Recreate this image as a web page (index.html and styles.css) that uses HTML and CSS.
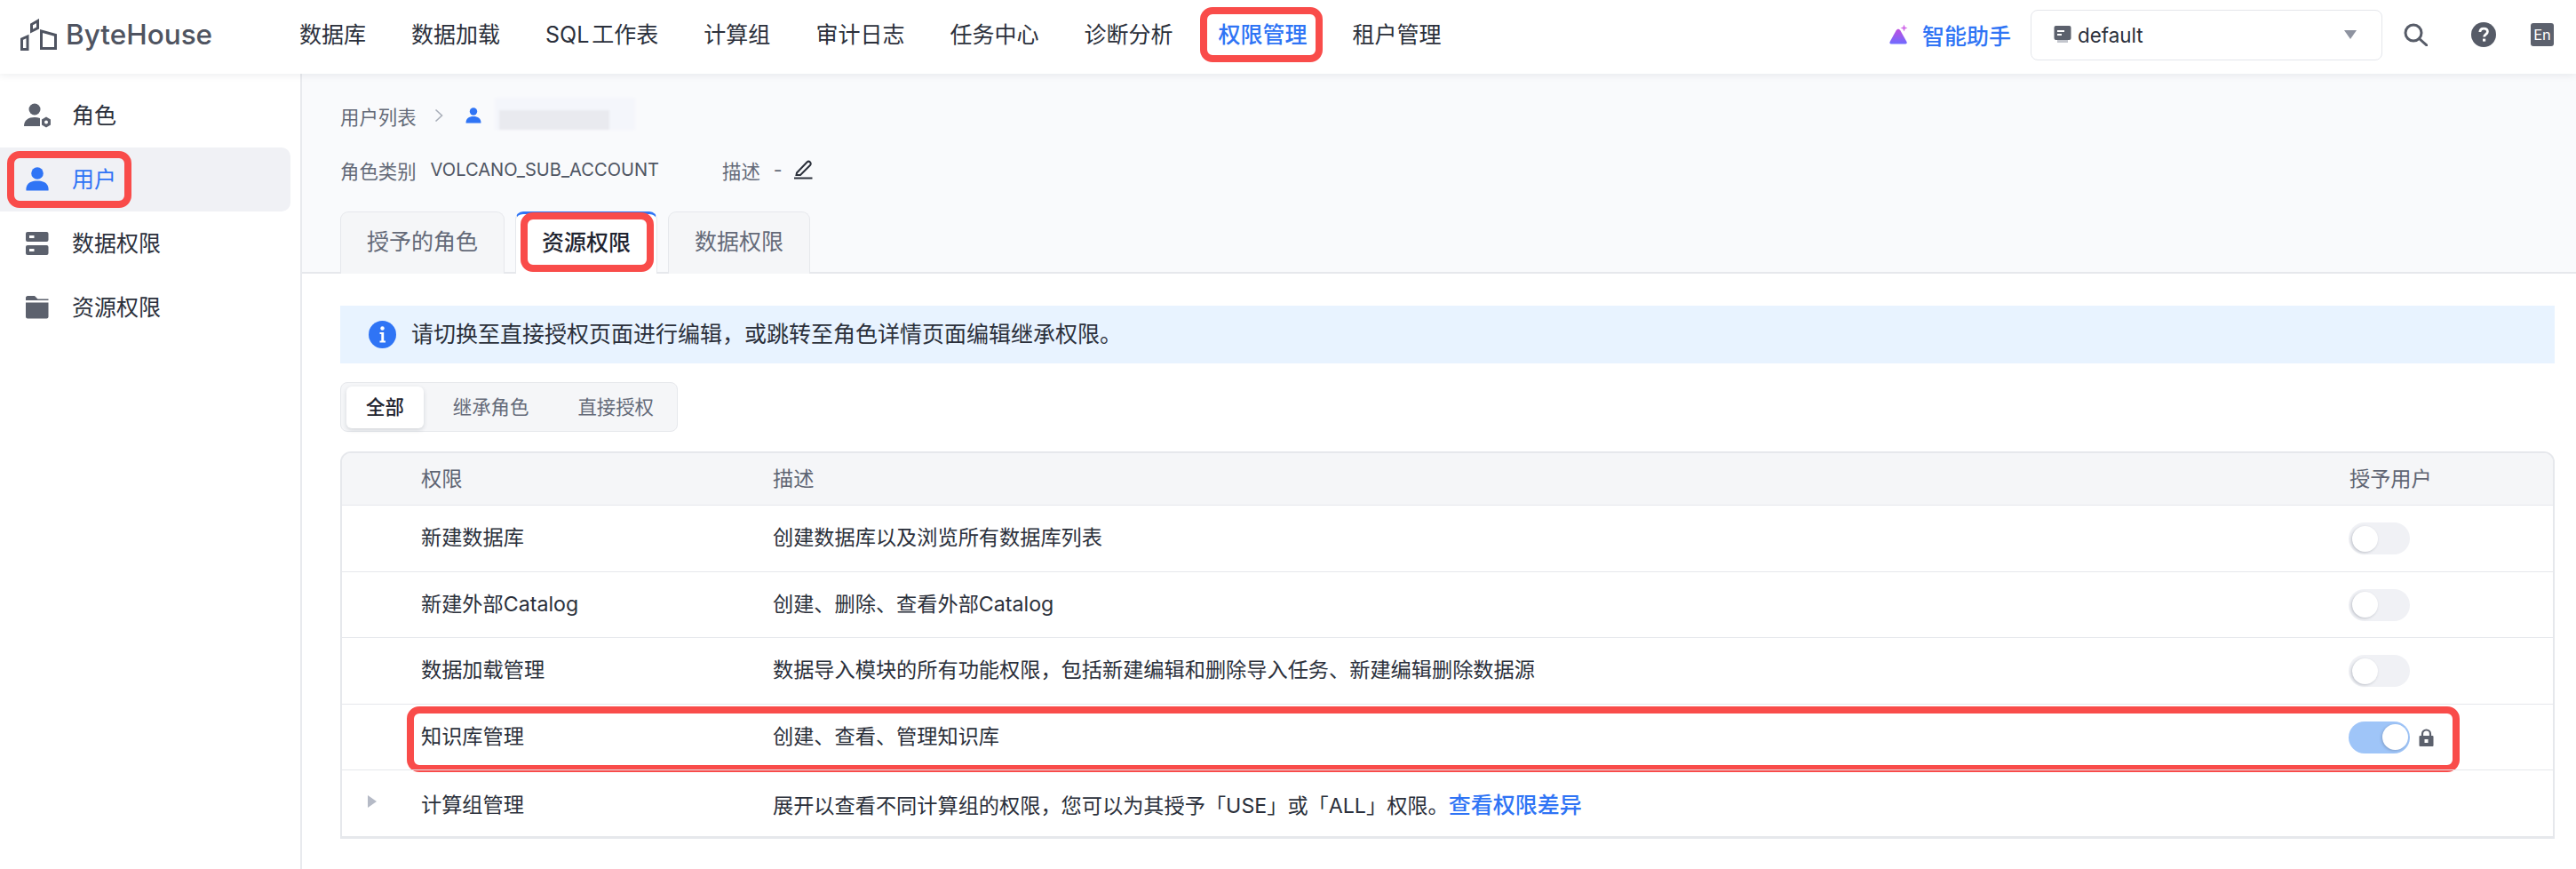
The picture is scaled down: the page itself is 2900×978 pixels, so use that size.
FILE: index.html
```html
<!DOCTYPE html>
<html lang="zh-CN">
<head>
<meta charset="utf-8">
<title>ByteHouse</title>
<link rel="stylesheet" href="styles.css">
</head>
<body>
<header class="topbar">
  <a class="logo">
    <svg class="logo-mark" viewBox="0 0 41 36" width="41" height="36" fill="none" stroke="#4f5461" stroke-width="3">
      <path d="M1.500 34.500V23L8 20V34.500Z"/>
      <path d="M12.500 14V6.500L19.500 2.500V10.500Z"/>
      <path d="M23.500 33.500V14L39.500 18.500V33.500Z"/>
    </svg>
    <span class="logo-text">ByteHouse</span>
  </a>
  <nav class="nav">
    <a class="nav-item">数据库</a>
    <a class="nav-item">数据加载</a>
    <a class="nav-item">SQL 工作表</a>
    <a class="nav-item">计算组</a>
    <a class="nav-item">审计日志</a>
    <a class="nav-item">任务中心</a>
    <a class="nav-item">诊断分析</a>
    <a class="nav-item is-active">权限管理<span class="mark mark-nav"></span></a>
    <a class="nav-item">租户管理</a>
  </nav>
  <div class="top-right">
    <a class="assistant">
      <svg viewBox="0 0 24 24" width="24" height="24">
        <defs><linearGradient id="ai" x1="0" y1="0" x2="0" y2="1"><stop offset="0" stop-color="#c04fe0"/><stop offset="1" stop-color="#6f6bff"/></linearGradient></defs>
        <path d="M3 22.500C1.500 22.500 1 21.500 1.600 20L8.500 7.500C10 5 12 5 13.500 7.500L20.500 20C21.200 21.500 20.500 22.500 19 22.500Z" fill="url(#ai)"/>
        <path d="M17.500 0.500L18.600 3.400L21.500 4.500L18.600 5.600L17.500 8.500L16.400 5.600L13.500 4.500L16.400 3.400Z" fill="#d16be8"/>
      </svg>
      <span>智能助手</span>
    </a>
    <div class="select">
      <svg viewBox="0 0 20 20" width="20" height="20">
        <rect x="0.500" y="0" width="19" height="16" rx="2" fill="#5c616d"/>
        <rect x="4" y="16" width="12" height="3" fill="#c3c6cd"/>
        <rect x="4" y="5" width="8" height="2" fill="#fff"/>
        <rect x="4" y="9" width="5" height="2" fill="#fff"/>
      </svg>
      <span class="select-value">default</span>
      <span class="select-caret"></span>
    </div>
    <svg class="icon-search" viewBox="0 0 27 26" width="27" height="26" fill="none" stroke="#575c68" stroke-width="3">
      <circle cx="11" cy="11" r="9"/>
      <path d="M17.500 17.500L26 25" stroke-linecap="round"/>
    </svg>
    <svg class="icon-help" viewBox="0 0 28 28" width="28" height="28">
      <circle cx="14" cy="14" r="14" fill="#565b67"/>
      <path d="M9.800 11C10 8.500 11.800 7.200 14.200 7.200C16.700 7.200 18.400 8.700 18.400 10.800C18.400 13.600 14.600 13.800 14.600 16.600" fill="none" stroke="#fff" stroke-width="2.800"/>
      <rect x="13" y="18.600" width="3.200" height="3" fill="#fff"/>
    </svg>
    <span class="lang">En</span>
  </div>
</header>

<div class="body">
  <aside class="side">
    <a class="side-item">
      <svg viewBox="0 0 30 30" width="30" height="30" fill="#5c616d">
        <circle cx="12" cy="8" r="6.500"/>
        <path d="M0 27C0 20 5 17 12 17C14 17 16 17.300 18 18L18 27Z"/>
        <path d="M25 16.500L30 19.500V25.500L25 28.500L20 25.500V19.500Z"/>
        <circle cx="25" cy="22.500" r="2" fill="#fff"/>
      </svg>
      <span class="side-label">角色</span>
    </a>
    <a class="side-item is-active">
      <svg viewBox="0 0 30 30" width="30" height="30" fill="#2f74f5">
        <circle cx="15" cy="8" r="6.800"/>
        <path d="M2.500 27.500C2 24 3 16.500 15 16.500C27 16.500 28 24 27.500 27.500Z"/>
      </svg>
      <span class="side-label">用户</span>
      <span class="mark mark-side"></span>
    </a>
    <a class="side-item">
      <svg viewBox="0 0 30 30" width="30" height="30" fill="#5c616d">
        <rect x="2" y="2" width="25.500" height="11" rx="2"/>
        <rect x="2" y="17" width="25.500" height="11" rx="2"/>
        <rect x="6" y="6" width="5.500" height="3" fill="#fff"/>
        <rect x="6" y="21" width="5.500" height="3" fill="#fff"/>
      </svg>
      <span class="side-label">数据权限</span>
    </a>
    <a class="side-item">
      <svg viewBox="0 0 30 30" width="30" height="30" fill="#5c616d">
        <path d="M2 4C2 3 3 2 4 2H12L15.500 5.500H27.500V7H2Z"/>
        <path d="M2 9.500H27.500V25.500C27.500 26.500 26.500 27.500 25.500 27.500H4C3 27.500 2 26.500 2 25.500Z"/>
      </svg>
      <span class="side-label">资源权限</span>
    </a>
  </aside>

  <main class="main">
    <section class="detail">
      <div class="crumbs">
        <span class="crumb-link">用户列表</span>
        <svg class="crumb-sep" viewBox="0 0 10 16" width="10" height="16" fill="none" stroke="#a9aeb9" stroke-width="1.600"><path d="M1.500 1.500L8.500 8L1.500 14.500"/></svg>
        <svg class="crumb-user" viewBox="0 0 18 18" width="18" height="18" fill="#2f74f5">
          <circle cx="9" cy="4.500" r="4.200"/>
          <path d="M0.500 17.500C0.500 12 4 10 9 10C14 10 17.500 12 17.500 17.500Z"/>
        </svg>
        <span class="redacted"></span>
      </div>
      <div class="meta">
        <span class="meta-label">角色类别</span>
        <span class="meta-value">VOLCANO_SUB_ACCOUNT</span>
        <span class="meta-label meta-desc">描述</span>
        <span class="meta-dash">-</span>
        <svg viewBox="0 0 21 22" width="21" height="22" fill="none" stroke="#2b303b" stroke-width="2"><path d="M3 15.500L14.500 3.500C15.500 2.500 17 2.500 18 3.500C19 4.500 19 6 18 7L7 18H2.500Z" transform="translate(0 -1)"/><path d="M0 20.500H20.500"/></svg>
      </div>
      <div class="tabs">
        <a class="tab">授予的角色</a>
        <a class="tab is-active">资源权限<span class="mark mark-tab"></span></a>
        <a class="tab">数据权限</a>
      </div>
    </section>

    <section class="content">
      <div class="alert">
        <svg viewBox="0 0 31 31" width="31" height="31">
          <circle cx="15.500" cy="15.500" r="15.500" fill="#2f74f5"/>
          <circle cx="15.500" cy="8.500" r="2.200" fill="#fff"/>
          <path d="M12.500 13H17.200V22.500H19V24.500H12.500V22.500H14.300V15H12.500Z" fill="#fff"/>
        </svg>
        <span class="alert-text">请切换至直接授权页面进行编辑，或跳转至角色详情页面编辑继承权限。</span>
      </div>

      <div class="seg">
        <span class="seg-item is-active">全部</span>
        <span class="seg-item">继承角色</span>
        <span class="seg-item">直接授权</span>
      </div>

      <div class="table">
        <div class="row row-head">
          <span></span>
          <span>权限</span>
          <span>描述</span>
          <span>授予用户</span>
        </div>
        <div class="row">
          <span></span>
          <span>新建数据库</span>
          <span>创建数据库以及浏览所有数据库列表</span>
          <span class="cell-switch"><span class="switch"></span></span>
        </div>
        <div class="row">
          <span></span>
          <span>新建外部Catalog</span>
          <span>创建、删除、查看外部Catalog</span>
          <span class="cell-switch"><span class="switch"></span></span>
        </div>
        <div class="row">
          <span></span>
          <span>数据加载管理</span>
          <span>数据导入模块的所有功能权限，包括新建编辑和删除导入任务、新建编辑删除数据源</span>
          <span class="cell-switch"><span class="switch"></span></span>
        </div>
        <div class="row">
          <span></span>
          <span>知识库管理</span>
          <span>创建、查看、管理知识库</span>
          <span class="cell-switch">
            <span class="switch is-on"></span>
            <svg viewBox="0 0 17 20" width="17" height="20">
              <path d="M4 9V6C4 3.500 6 1.500 8.500 1.500C11 1.500 13 3.500 13 6V9" fill="none" stroke="#5c616d" stroke-width="2.200"/>
              <rect x="0.500" y="8" width="16" height="12" rx="1" fill="#5c616d"/>
              <rect x="6.500" y="12" width="4" height="4" fill="#fff"/>
            </svg>
          </span>
          <span class="mark mark-row"></span>
        </div>
        <div class="row">
          <span class="cell-caret"><span class="caret"></span></span>
          <span>计算组管理</span>
          <span>展开以查看不同计算组的权限，您可以为其授予「USE」或「ALL」权限。<a class="link">查看权限差异</a></span>
          <span></span>
        </div>
      </div>
    </section>
  </main>
</div>
</body>
</html>
```

FILE: styles.css
```css
* { box-sizing: border-box; }

html, body {
  margin: 0;
  height: 100%;
  overflow: hidden;
}

body {
  display: flex;
  flex-direction: column;
  background: #fff;
  color: #2b303b;
  font-family: Inter, "Noto Sans CJK SC", sans-serif;
  font-size: 23.2px;
}

a { color: inherit; text-decoration: none; }
svg { display: block; flex: none; }

.mark {
  position: absolute;
  border: 8px solid #f94c4a;
  border-radius: 14px;
  pointer-events: none;
}

/* Top bar */
.topbar {
  position: relative;
  z-index: 2;
  flex: none;
  display: flex;
  align-items: center;
  height: 83px;
  padding: 0 25px 5px 23px;
  background: #fff;
  box-shadow: 0 2px 8px rgba(40, 50, 70, 0.08);
}

.logo {
  display: flex;
  align-items: center;
  gap: 10px;
  width: 314px;
}

.logo-mark { margin-top: -1px; }

.logo-text {
  font-size: 31.500px;
  font-weight: 500;
  line-height: 34px;
  color: #4f5461;
}

.nav {
  display: flex;
  gap: 51px;
  font-size: 25px;
  word-spacing: -4px;
}

.nav-item {
  position: relative;
  line-height: 34px;
  white-space: nowrap;
}

.nav-item.is-active { color: #2f74f5; font-weight: 500; }

.mark-nav { inset: -14px -18px -14px -20px; }

.top-right {
  display: flex;
  align-items: center;
  margin-left: auto;
}

.assistant {
  display: flex;
  align-items: center;
  gap: 14px;
  margin-right: 22px;
  font-size: 25px;
  font-weight: 500;
  color: #2f74f5;
}

.select {
  display: flex;
  align-items: center;
  width: 396px;
  height: 57px;
  padding: 0 28px 0 25px;
  border: 1.500px solid #e4e6eb;
  border-radius: 8px;
  background: #fff;
}

.select-value { margin-left: 7px; font-size: 22.400px; }

.select-caret {
  margin-left: auto;
  border-left: 7px solid transparent;
  border-right: 7px solid transparent;
  border-top: 10px solid #8e93a0;
}

.icon-search { margin-left: 24px; }
.icon-help { margin-left: 49px; }

.lang {
  width: 26px;
  height: 26px;
  margin-left: 39px;
  border-radius: 3px;
  background: #5c616d;
  color: #fff;
  font-size: 16.500px;
  line-height: 26px;
  text-align: center;
}

/* Shell */
.body {
  flex: 1;
  display: flex;
  min-height: 0;
}

/* Sidebar */
.side {
  flex: none;
  width: 340px;
  padding: 11px 11px 0 0;
  border-right: 2px solid #e8eaee;
  background: #fff;
}

.side-item {
  position: relative;
  display: flex;
  align-items: center;
  gap: 25px;
  height: 72px;
  padding-left: 27px;
  font-size: 25px;
}

.side-label { padding-bottom: 5px; margin-left: -1px; }

.side-item.is-active {
  border-radius: 0 10px 10px 0;
  background: #f0f1f5;
  color: #2f74f5;
}

.mark-side { top: 4px; bottom: 4px; left: 8px; width: 140px; }

/* Main */
.main {
  flex: 1;
  min-width: 0;
  display: flex;
  flex-direction: column;
}

.detail {
  flex: none;
  padding: 29px 0 0 43px;
  border-bottom: 2px solid #e6e8ec;
  background: #f9fafc;
  color: #646a78;
  font-size: 21.400px;
}

.crumbs {
  display: flex;
  align-items: center;
  height: 36px;
}

.crumb-sep { margin-left: 20px; }
.crumb-user { margin-left: 25px; }

.redacted {
  width: 158px;
  height: 36px;
  margin: -4px 0 0 15px;
  background: linear-gradient(#e9eaef, #e9eaef) 5px 14px / 124px 22px no-repeat, #f4f6fb;
  filter: blur(1px);
}

.meta {
  display: flex;
  align-items: center;
  height: 30px;
  margin-top: 28px;
}

.meta-value { margin-left: 16px; color: #4f5563; font-size: 20.100px; }
.meta-desc { margin-left: 71px; }
.meta-dash { margin-left: 15px; }
.meta svg { margin-left: 13px; }

.tabs {
  display: flex;
  gap: 12px;
  margin: 32px 0 -2px;
  font-size: 25px;
}

.tab {
  position: relative;
  display: flex;
  align-items: center;
  height: 70px;
  padding: 0 29px 8px;
  border: 1.500px solid #e6e8ec;
  border-bottom: 0;
  border-radius: 9px 9px 0 0;
  background: #f5f6f8;
}

.tab.is-active {
  border-top: 3px solid #2f74f5;
  background: #fff;
  color: #1f2430;
  font-weight: 500;
}

.mark-tab { inset: -2px 3px 2px 5px; }

.content {
  flex: 1;
  padding: 36px 24px 0 43px;
}

.alert {
  display: flex;
  align-items: center;
  gap: 18px;
  height: 65px;
  padding-left: 32px;
  background: #e8f3ff;
  font-size: 25px;
}

.alert-text { padding-bottom: 5px; margin-left: -1px; }

.seg {
  display: flex;
  align-items: center;
  width: 380px;
  height: 56px;
  margin-top: 21px;
  padding: 0 6px;
  border: 1.500px solid #e6e8ec;
  border-radius: 8px;
  background: #f5f6f8;
  color: #646a78;
  font-size: 21.400px;
  white-space: nowrap;
}

.seg-item { padding: 0 27.500px; line-height: 47px; }

.seg-item.is-active {
  margin-right: 5.500px;
  padding: 0 22px;
  border-radius: 6px;
  background: #fff;
  box-shadow: 0 2px 5px rgba(40, 50, 70, 0.16);
  color: #1f2430;
  font-weight: 500;
}

/* Table */
.table {
  margin-top: 22px;
  border: 2px solid #e6e8ec;
  border-bottom-width: 3px;
  border-radius: 12px 12px 0 0;
}

.row {
  position: relative;
  display: grid;
  grid-template-columns: 89px 396px 1fr 229px;
  align-items: center;
  height: 74.500px;
  padding-bottom: 5px;
  border-top: 1.500px solid #e6e8ec;
}

.row:last-child { height: 75px; padding-bottom: 1px; }

.row-head {
  height: 58px;
  padding-bottom: 4px;
  border-top: 0;
  border-radius: 10px 10px 0 0;
  background: #f5f6f8;
  color: #5f6573;
}

.cell-switch {
  display: flex;
  align-items: center;
  gap: 10px;
  margin: 6px 0 0 -1px;
}

.switch {
  position: relative;
  width: 69px;
  height: 36px;
  border-radius: 18px;
  background: #f0f1f5;
}

.switch::after {
  content: "";
  position: absolute;
  top: 3.500px;
  left: 4px;
  width: 29px;
  height: 29px;
  border-radius: 50%;
  background: #fff;
  box-shadow: -1px 1px 3px rgba(40, 50, 70, 0.25);
}

.switch.is-on { background: #9fc5f8; }
.switch.is-on::after { left: 38px; }

.mark-row { top: 2px; bottom: -3px; left: 73px; right: 105px; }

.cell-caret { padding-left: 29px; }

.caret {
  display: block;
  width: 0;
  border-left: 10px solid #b5bac6;
  border-top: 7px solid transparent;
  border-bottom: 7px solid transparent;
  margin-top: -4px;
}

.link { color: #2f74f5; font-size: 25px; font-weight: 500; }
```
